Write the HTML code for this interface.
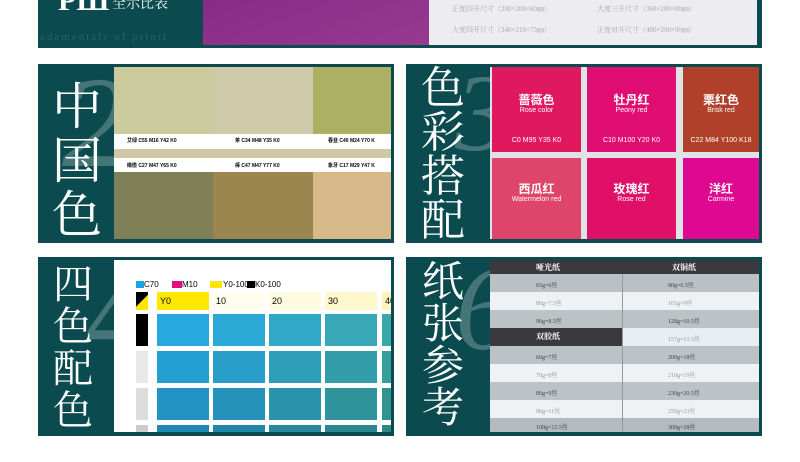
<!DOCTYPE html><html><head><meta charset="utf-8"><style>
*{margin:0;padding:0;box-sizing:border-box}
body{width:800px;height:462px;background:#fff;position:relative;overflow:hidden;font-family:"Liberation Sans","Noto Sans CJK SC",sans-serif}
.a{position:absolute}
.p{position:absolute;background:#0b4a4f}
.big{position:absolute;color:#fff;font-family:"Liberation Serif","Noto Serif CJK SC",serif;line-height:1;text-align:center}
.num{position:absolute;color:rgba(140,170,170,.45);font-family:"Liberation Serif",serif;font-style:italic}
.t{position:absolute;color:#fff;text-align:center;font-weight:bold;font-size:12px;line-height:13px}
.t small{display:block;font-size:7px;font-weight:normal;line-height:8px}
.t i{position:absolute;font-style:normal;font-size:7px;font-weight:normal}
.c{position:absolute}
.r{position:absolute;left:490px;width:269px;height:18px;font-family:"Liberation Serif","Noto Serif CJK SC",serif;font-size:6px;color:#444}
.r span{position:absolute;top:6px}
</style></head><body>
<!-- top panel -->
<div class="p" style="left:38px;top:0;width:724px;height:48px"></div>
<div class="a" style="left:203px;top:0;width:226px;height:45px;background:linear-gradient(160deg,#8a2a88,#963a90)"></div>
<div class="a" style="left:429px;top:0;width:328px;height:45px;background:#ededf1"></div>
<div class="big" style="left:58px;top:-14px;font-size:30px;font-weight:bold">РШ</div>
<div class="big" style="left:112px;top:-2px;font-size:14px">全示比表</div>
<div class="a" style="left:40px;top:31px;font-family:'Liberation Serif',serif;font-size:11px;color:#2b6266;letter-spacing:2px;white-space:nowrap">adamentals of printi</div>
<div class="a" style="left:452px;top:4px;font-size:7px;color:#aaa;font-family:'Liberation Serif','Noto Serif CJK SC',serif">正度四开尺寸（280×200×60㎜）</div>
<div class="a" style="left:597px;top:4px;font-size:7px;color:#aaa;font-family:'Liberation Serif','Noto Serif CJK SC',serif">大度三开尺寸（360×280×80㎜）</div>
<div class="a" style="left:452px;top:25px;font-size:7px;color:#aaa;font-family:'Liberation Serif','Noto Serif CJK SC',serif">大度四开尺寸（340×210×75㎜）</div>
<div class="a" style="left:597px;top:25px;font-size:7px;color:#aaa;font-family:'Liberation Serif','Noto Serif CJK SC',serif">正度对开尺寸（400×290×90㎜）</div>

<!-- panel 2 -->
<div class="p" style="left:38px;top:64px;width:356px;height:179px"></div>
<div class="num" style="left:62px;top:48px;font-size:130px">2</div>
<div class="big" style="left:50px;top:80px;font-size:50px;width:54px;line-height:54px">中<br>国<br>色</div>
<div class="a" style="left:114px;top:67px;width:277px;height:172px;background:#cec9a4"></div>
<div class="c" style="left:114px;top:67px;width:99px;height:67px;background:#cccb9e"></div>
<div class="c" style="left:213px;top:67px;width:100px;height:67px;background:#cdc9a9"></div>
<div class="c" style="left:313px;top:67px;width:78px;height:67px;background:#acb062"></div>
<div class="c" style="left:114px;top:134px;width:277px;height:15px;background:#fff"></div>
<div class="c" style="left:114px;top:158px;width:277px;height:14px;background:#fff"></div>
<div class="c" style="left:114px;top:172px;width:99px;height:67px;background:#808058"></div>
<div class="c" style="left:213px;top:172px;width:100px;height:67px;background:#9c8650"></div>
<div class="c" style="left:313px;top:172px;width:78px;height:67px;background:#d8b98a"></div>
<div class="a" style="left:127px;top:137px;font-size:5px;font-weight:bold;white-space:nowrap">艾绿 C55 M16 Y42 K0</div>
<div class="a" style="left:235px;top:137px;font-size:5px;font-weight:bold;white-space:nowrap">茶 C34 M48 Y35 K0</div>
<div class="a" style="left:328px;top:137px;font-size:5px;font-weight:bold;white-space:nowrap">春韭 C40 M24 Y70 K</div>
<div class="a" style="left:127px;top:162px;font-size:5px;font-weight:bold;white-space:nowrap">橄榄 C27 M47 Y65 K0</div>
<div class="a" style="left:235px;top:162px;font-size:5px;font-weight:bold;white-space:nowrap">棒 C47 M47 Y77 K0</div>
<div class="a" style="left:328px;top:162px;font-size:5px;font-weight:bold;white-space:nowrap">象牙 C17 M29 Y47 K</div>

<!-- panel 3 -->
<div class="p" style="left:406px;top:64px;width:356px;height:179px"></div>
<div class="num" style="left:455px;top:50px;font-size:110px">3</div>
<div class="big" style="left:420px;top:67px;font-size:44px;width:46px;line-height:44px">色<br>彩<br>搭<br>配</div>
<div class="a" style="left:490px;top:67px;width:269px;height:172px;background:#dfe3e8"></div>
<div class="t" style="left:492px;top:67px;width:89px;height:85px;background:#e0195e;padding-top:27px">蔷薇色<small>Rose color</small><i style="left:0;right:0;top:67px">C0 M95 Y35 K0</i></div>
<div class="t" style="left:587px;top:67px;width:89px;height:85px;background:#e00d72;padding-top:27px">牡丹红<small>Peony red</small><i style="left:0;right:0;top:67px">C10 M100 Y20 K0</i></div>
<div class="t" style="left:683px;top:67px;width:76px;height:85px;background:#b0402a;padding-top:27px">栗红色<small>Brisk red</small><i style="left:0;right:0;top:67px">C22 M84 Y100 K18</i></div>
<div class="t" style="left:492px;top:158px;width:89px;height:81px;background:#df456a;padding-top:25px">西瓜红<small>Watermelon red</small></div>
<div class="t" style="left:587px;top:158px;width:89px;height:81px;background:#e01068;padding-top:25px">玫瑰红<small>Rose red</small></div>
<div class="t" style="left:683px;top:158px;width:76px;height:81px;background:#df0890;padding-top:25px">洋红<small>Carmine</small></div>

<!-- panel 4 -->
<div class="p" style="left:38px;top:257px;width:356px;height:179px"></div>
<div class="num" style="left:85px;top:240px;font-size:130px;font-style:normal">4</div>
<div class="big" style="left:50px;top:264px;font-size:40px;width:46px;line-height:42px">四<br>色<br>配<br>色</div>
<div class="a" style="left:114px;top:260px;width:277px;height:172px;background:#fff;overflow:hidden">
<div class="a" style="left:22px;top:21px;width:8px;height:7px;background:#1ba3e6"></div><div class="a" style="left:30px;top:20px;font-size:8px">C70</div>
<div class="a" style="left:58px;top:21px;width:10px;height:7px;background:#e0107a"></div><div class="a" style="left:68px;top:20px;font-size:8px">M10</div>
<div class="a" style="left:96px;top:21px;width:12px;height:7px;background:#ffe600"></div><div class="a" style="left:109px;top:20px;font-size:8px">Y0-100</div>
<div class="a" style="left:133px;top:21px;width:8px;height:7px;background:#000"></div><div class="a" style="left:141px;top:20px;font-size:8px">K0-100</div>
<div class="a" style="left:22px;top:32px;width:12px;height:18px;background:linear-gradient(135deg,#000 50%,#ffe600 50%)"></div>
<div class="a" style="left:43px;top:32px;width:52px;height:18px;background:#ffe800;font-size:9px;padding:4px 3px">Y0</div>
<div class="a" style="left:99px;top:32px;width:52px;height:18px;background:#fffdf0;font-size:9px;padding:4px 3px">10</div>
<div class="a" style="left:155px;top:32px;width:52px;height:18px;background:#fffbe0;font-size:9px;padding:4px 3px">20</div>
<div class="a" style="left:211px;top:32px;width:52px;height:18px;background:#fff8cc;font-size:9px;padding:4px 3px">30</div>
<div class="a" style="left:268px;top:32px;width:52px;height:18px;background:#fff5bb;font-size:9px;padding:4px 3px">40</div>
<div class="a" style="left:22px;top:54px;width:12px;height:32px;background:#000"></div>
<div class="a" style="left:22px;top:91px;width:12px;height:32px;background:#e8e8e8"></div>
<div class="a" style="left:22px;top:128px;width:12px;height:32px;background:#dcdcdc"></div>
<div class="a" style="left:22px;top:165px;width:12px;height:10px;background:#ccc"></div>
<div class="a" style="left:43px;top:54px;width:52px;height:32px;background:#27a9e0"></div>
<div class="a" style="left:99px;top:54px;width:52px;height:32px;background:#2aa8d6"></div>
<div class="a" style="left:155px;top:54px;width:52px;height:32px;background:#32a8c8"></div>
<div class="a" style="left:211px;top:54px;width:52px;height:32px;background:#38a8b8"></div>
<div class="a" style="left:268px;top:54px;width:52px;height:32px;background:#3aa8a8"></div>
<div class="a" style="left:43px;top:91px;width:52px;height:32px;background:#259ed2"></div>
<div class="a" style="left:99px;top:91px;width:52px;height:32px;background:#289ec8"></div>
<div class="a" style="left:155px;top:91px;width:52px;height:32px;background:#2e9eb9"></div>
<div class="a" style="left:211px;top:91px;width:52px;height:32px;background:#339ea9"></div>
<div class="a" style="left:268px;top:91px;width:52px;height:32px;background:#369e9c"></div>
<div class="a" style="left:43px;top:128px;width:52px;height:32px;background:#2293c4"></div>
<div class="a" style="left:99px;top:128px;width:52px;height:32px;background:#2593b9"></div>
<div class="a" style="left:155px;top:128px;width:52px;height:32px;background:#2a93ab"></div>
<div class="a" style="left:211px;top:128px;width:52px;height:32px;background:#2f939c"></div>
<div class="a" style="left:268px;top:128px;width:52px;height:32px;background:#32938f"></div>
<div class="a" style="left:43px;top:165px;width:52px;height:10px;background:#1f88b6"></div>
<div class="a" style="left:99px;top:165px;width:52px;height:10px;background:#2288ab"></div>
<div class="a" style="left:155px;top:165px;width:52px;height:10px;background:#27889e"></div>
<div class="a" style="left:211px;top:165px;width:52px;height:10px;background:#2b8890"></div>
<div class="a" style="left:268px;top:165px;width:52px;height:10px;background:#2e8884"></div>
</div>

<!-- panel 5 -->
<div class="p" style="left:406px;top:257px;width:356px;height:179px"></div>
<div class="num" style="left:455px;top:240px;font-size:120px">6</div>
<div class="big" style="left:420px;top:262px;font-size:42px;width:46px;line-height:42px">纸<br>张<br>参<br>考</div>
<div class="a" style="left:490px;top:260px;width:269px;height:172px;background:#d9dee1"></div>
<div class="r" style="top:260px;height:14px;background:#3a3a3e;color:#fff;font-size:8px;font-weight:bold"><span style="left:46px;top:2px">哑光纸</span><span style="left:182px;top:2px">双铜纸</span></div>
<div class="r" style="top:274px;background:#b9c1c5"><span style="left:46px">65g=6丝</span><span style="left:178px">80g=6.5丝</span></div>
<div class="r" style="top:292px;background:#eef2f4;color:#999"><span style="left:46px">80g=7.5丝</span><span style="left:178px">105g=9丝</span></div>
<div class="r" style="top:310px;background:#bcc3c7"><span style="left:46px">90g=8.5丝</span><span style="left:178px">128g=10.5丝</span></div>
<div class="r" style="top:328px;background:#e8eef1;color:#999"><span style="left:178px">157g=13.5丝</span></div>
<div class="a" style="left:490px;top:328px;width:132px;height:18px;background:#3a3a3e;color:#fff;font-size:8px;font-weight:bold;padding:3px 0 0 46px;font-family:'Liberation Serif','Noto Serif CJK SC',serif">双胶纸</div>
<div class="r" style="top:346px;background:#bcc3c7"><span style="left:46px">60g=7丝</span><span style="left:178px">200g=18丝</span></div>
<div class="r" style="top:364px;background:#eef2f4;color:#999"><span style="left:46px">70g=8丝</span><span style="left:178px">210g=19丝</span></div>
<div class="r" style="top:382px;background:#bcc3c7"><span style="left:46px">80g=9丝</span><span style="left:178px">230g=20.5丝</span></div>
<div class="r" style="top:400px;background:#eef2f4;color:#999"><span style="left:46px">90g=11丝</span><span style="left:178px">250g=23丝</span></div>
<div class="r" style="top:418px;height:14px;background:#b4bbc0"><span style="left:46px;top:4px">100g=12.5丝</span><span style="left:178px;top:4px">300g=28丝</span></div>
<div class="a" style="left:622px;top:274px;width:1px;height:158px;background:#999"></div>
</body></html>
